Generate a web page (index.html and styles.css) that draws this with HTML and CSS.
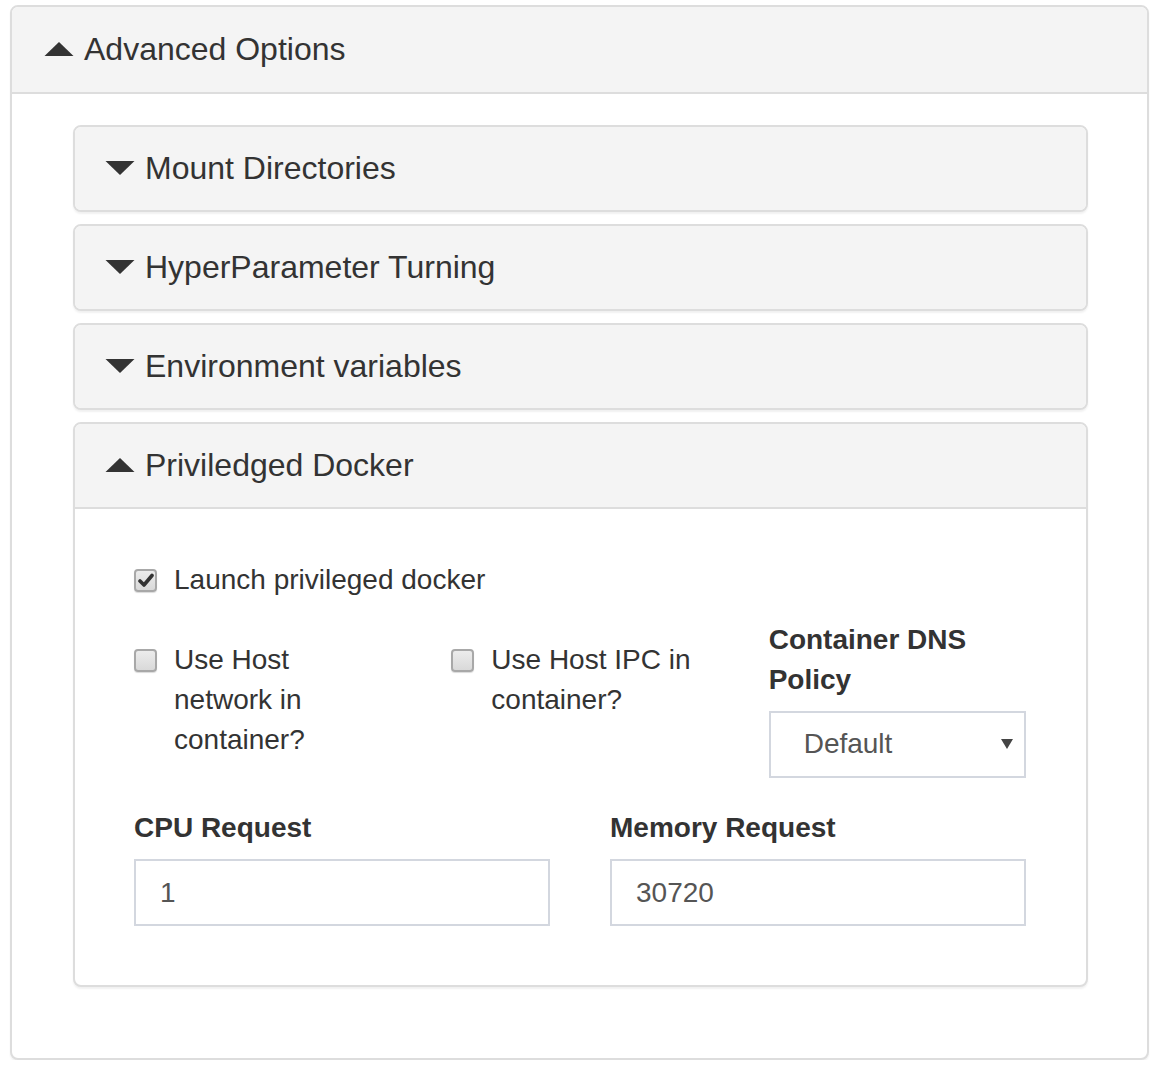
FILE: index.html
```html
<!DOCTYPE html>
<html>
<head>
<meta charset="utf-8">
<link rel="stylesheet" href="styles.css">
</head>
<body>
<div class="panel outer">
  <div class="panel-heading outer-heading">
    <svg class="tri" width="30" height="16" viewBox="0 0 30 16"><polygon points="15,1 29.5,15 0.5,15" fill="#333"/></svg>
    <span class="title">Advanced Options</span>
  </div>
  <div class="outer-body">
    <div class="panel inner">
      <div class="panel-heading inner-heading closed">
        <svg class="tri" width="30" height="16" viewBox="0 0 30 16"><polygon points="0.5,1 29.5,1 15,15" fill="#333"/></svg>
        <span class="title">Mount Directories</span>
      </div>
    </div>
    <div class="panel inner">
      <div class="panel-heading inner-heading closed">
        <svg class="tri" width="30" height="16" viewBox="0 0 30 16"><polygon points="0.5,1 29.5,1 15,15" fill="#333"/></svg>
        <span class="title">HyperParameter Turning</span>
      </div>
    </div>
    <div class="panel inner">
      <div class="panel-heading inner-heading closed">
        <svg class="tri" width="30" height="16" viewBox="0 0 30 16"><polygon points="0.5,1 29.5,1 15,15" fill="#333"/></svg>
        <span class="title">Environment variables</span>
      </div>
    </div>
    <div class="panel inner">
      <div class="panel-heading inner-heading">
        <svg class="tri" width="30" height="16" viewBox="0 0 30 16"><polygon points="15,1 29.5,15 0.5,15" fill="#333"/></svg>
        <span class="title">Priviledged Docker</span>
      </div>
      <div class="inner-body">
        <div class="check-row first">
          <span class="cbox checked"><svg width="16" height="15" viewBox="0 0 16 15"><path d="M2 8 L6 12 L14 2.5" stroke="#333" stroke-width="3.6" fill="none" stroke-linecap="round" stroke-linejoin="round"/></svg></span>
          <span class="ctext">Launch privileged docker</span>
        </div>
        <div class="row3">
          <div class="check-row">
            <span class="cbox"></span>
            <span class="ctext">Use Host<br>network in<br>container?</span>
          </div>
          <div class="check-row">
            <span class="cbox"></span>
            <span class="ctext">Use Host IPC in<br>container?</span>
          </div>
          <div class="field">
            <div class="label">Container DNS<br>Policy</div>
            <div class="select"><span>Default</span><svg width="14" height="12" viewBox="0 0 14 12"><polygon points="1,1 13,1 7,11" fill="#444"/></svg></div>
          </div>
        </div>
        <div class="row2">
          <div class="field">
            <div class="label">CPU Request</div>
            <div class="input">1</div>
          </div>
          <div class="field">
            <div class="label">Memory Request</div>
            <div class="input">30720</div>
          </div>
        </div>
      </div>
    </div>
  </div>
</div>
</body>
</html>
```

FILE: styles.css
```css
* { box-sizing: border-box; }
html, body { margin: 0; padding: 0; background: #fff; }
body {
  font-family: "Liberation Sans", Arial, sans-serif;
  color: #333;
  font-size: 28px;
  line-height: 40px;
}
.panel {
  background: #fff;
  border: 2px solid #ddd;
  border-radius: 8px;
  box-shadow: 0 2px 2px rgba(0,0,0,0.06);
}
.outer {
  margin: 5px 8px 0 10px;
  height: 1055px;
}
.panel-heading {
  background: #f4f4f4;
  display: flex;
  align-items: center;
  border-bottom: 2px solid #ddd;
  border-radius: 6px 6px 0 0;
}
.outer-heading {
  height: 87px;
  padding: 0 31px 2px 32px;
}
.tri { flex: none; margin-right: 10px; }
.title {
  font-size: 32px;
  line-height: 36px;
  color: #333;
}
.outer-body {
  padding: 31px 59px 70px 61px;
}
.inner { margin-bottom: 12px; }
.inner-heading {
  height: 85px;
  padding: 0 30px 2px 30px;
}
.inner-heading.closed {
  height: 83px;
  border-bottom: none;
  border-radius: 6px;
}
.inner-body {
  padding: 30px 60px 59px 59px;
}
.check-row {
  display: flex;
  align-items: flex-start;
  margin-top: 20px;
}
.check-row.first { margin-top: 21px; }
.cbox {
  flex: none;
  width: 23px;
  height: 23px;
  margin-top: 9px;
  margin-right: 17px;
  border: 2px solid #a8a8a8;
  border-radius: 4px;
  background: linear-gradient(#ececec, #d9d9d9);
  box-shadow: 0 1px 1px rgba(0,0,0,0.15);
  display: flex;
  align-items: center;
  justify-content: center;
}
.ctext { color: #333; }
.row3 {
  display: grid;
  grid-template-columns: 1fr 1fr 1fr;
  column-gap: 60px;
  margin-top: 20px;
}
.row3 .check-row { margin-top: 20px; }
.label {
  font-weight: bold;
  color: #333;
}
.select, .input {
  border: 2px solid #d3d7df;
  height: 67px;
  margin-top: 11px;
  color: #555;
  display: flex;
  align-items: center;
}
.select {
  padding: 0 10px 2px 33px;
  justify-content: space-between;
}
.input { padding: 0 24px; }
.row2 {
  display: grid;
  grid-template-columns: 1fr 1fr;
  column-gap: 60px;
  margin-top: 30px;
}
```
